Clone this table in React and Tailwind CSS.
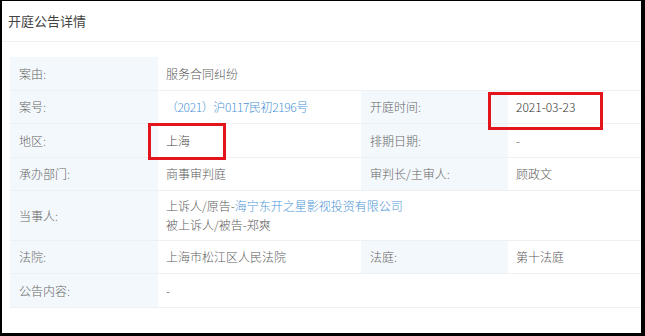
import React from 'react';

const font = { fontFamily: '"Noto Sans CJK SC", "Noto Sans", sans-serif' };

const Label = ({ children }) => (
  <td className="bg-[#f3f8fc] text-[#666] pl-[9px] align-middle">{children}</td>
);

const Value = ({ children, color = 'text-[#5c5c5c]', colSpan }) => (
  <td colSpan={colSpan} className={`pl-[8px] align-middle ${color}`}>{children}</td>
);

const App = () => {
  return (
    <div
      className="relative w-[645px] h-[336px] bg-white border-black border-t-[1px] border-l-[2px] border-r-[4px] border-b-[3px] overflow-hidden"
      style={font}
    >
      {/* Header */}
      <div className="h-[41px] border-b border-[#f2f2f2] flex items-center pl-[6px] text-[13px] text-[#444]">
        开庭公告详情
      </div>

      <div className="pt-[15px] pl-[8px]">
        <table className="w-full border-collapse text-[12px] leading-[19px] font-light">
          <colgroup>
            <col className="w-[148px]" />
            <col className="w-[203px]" />
            <col className="w-[147px]" />
            <col />
          </colgroup>
          <tbody>
            <tr className="h-[33px] border-b border-[#eef1f4]">
              <Label>案由:</Label>
              <Value colSpan={3}>服务合同纠纷</Value>
            </tr>
            <tr className="h-[33px] border-b border-[#eef1f4]">
              <Label>案号:</Label>
              <Value color="text-[#4a94d6] tracking-[-0.4px]">（2021）沪0117民初2196号</Value>
              <Label>开庭时间:</Label>
              <Value color="text-[#333]">2021-03-23</Value>
            </tr>
            <tr className="h-[34px] border-b border-[#eef1f4]">
              <Label>地区:</Label>
              <Value color="text-[#444]">上海</Value>
              <Label>排期日期:</Label>
              <Value>-</Value>
            </tr>
            <tr className="h-[33px] border-b border-[#eef1f4]">
              <Label>承办部门:</Label>
              <Value>商事审判庭</Value>
              <Label>审判长/主审人:</Label>
              <Value>顾政文</Value>
            </tr>
            <tr className="h-[50px] border-b border-[#eef1f4]">
              <Label>当事人:</Label>
              <Value colSpan={3}>
                <div>
                  上诉人/原告-<span className="text-[#4a94d6]">海宁东开之星影视投资有限公司</span>
                </div>
                <div>被上诉人/被告-郑爽</div>
              </Value>
            </tr>
            <tr className="h-[33px] border-b border-[#eef1f4]">
              <Label>法院:</Label>
              <Value>上海市松江区人民法院</Value>
              <Label>法庭:</Label>
              <Value>第十法庭</Value>
            </tr>
            <tr className="h-[34px] border-b border-[#eef1f4]">
              <Label>公告内容:</Label>
              <Value colSpan={3}>-</Value>
            </tr>
          </tbody>
        </table>
      </div>

      {/* Annotation boxes */}
      <div className="absolute left-[146px] top-[122px] w-[78px] h-[37px] border-[3px] border-[#e3141b]" />
      <div className="absolute left-[486px] top-[91px] w-[115px] h-[38px] border-[3px] border-[#e3141b]" />
    </div>
  );
};

export default App;
